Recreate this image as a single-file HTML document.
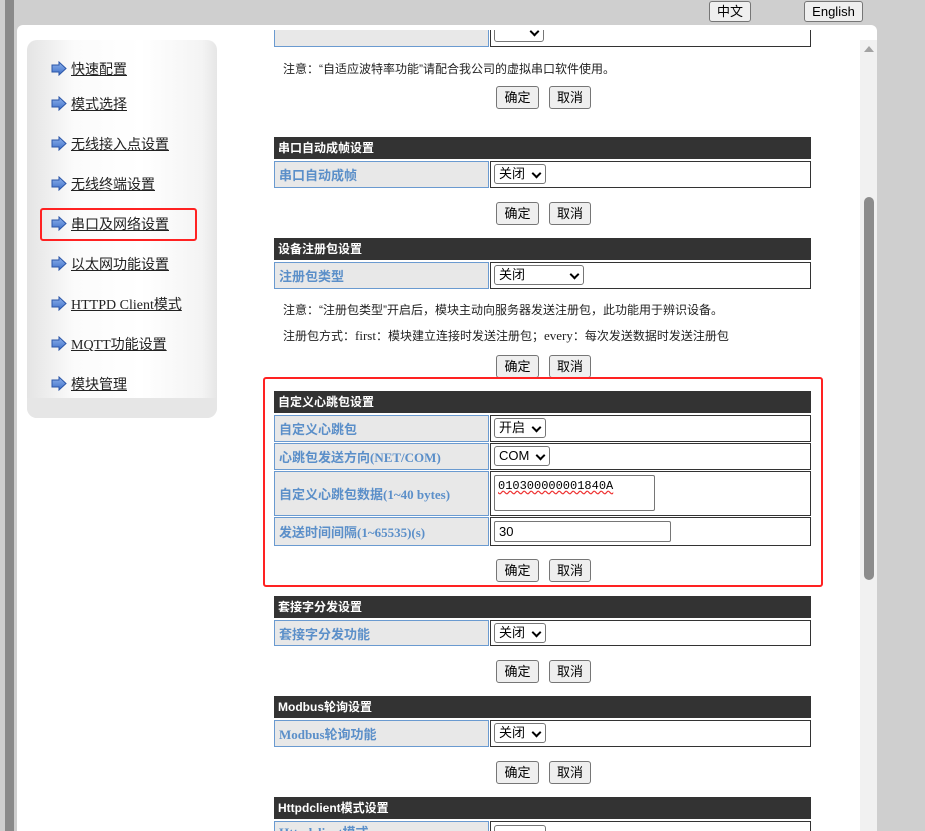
<!DOCTYPE html>
<html style="overflow:hidden;height:831px"><head><meta charset="utf-8"><style>
*{box-sizing:border-box;margin:0;padding:0}
html,body{overflow:hidden}
body{width:925px;height:831px;position:relative;background:#cfcfcf;font-family:"Liberation Sans","Noto Sans CJK SC",sans-serif;font-size:13px;color:#222}
.a{position:absolute}
.lb{position:absolute;left:5px;top:0;width:9px;height:831px;background:#8a8a8a}
.panel{position:absolute;left:17px;top:25px;width:860px;height:806px;background:#fff;border-radius:6px 6px 0 0}
.sb{position:absolute;left:860px;top:40px;width:17px;height:791px;background:#f1f1f1}
.thumb{position:absolute;left:864px;top:197px;width:10px;height:383px;background:#8c8c8c;border-radius:5px}
.tri{position:absolute;left:864px;top:46px;width:0;height:0;border-left:5px solid transparent;border-right:5px solid transparent;border-bottom:6px solid #a3a3a3}
.side{position:absolute;left:27px;top:40px;width:190px;height:378px;border-radius:10px;background:linear-gradient(90deg,#e4e4e4 0%,#fbfbfb 25%,#fff 60%,#f4f4f4 92%,#e6e6e6 100%);overflow:hidden}
.side .bot{position:absolute;left:0;bottom:0;width:100%;height:20px;background:#e6e6e6}
.nav{position:absolute;left:51px;font-size:14px;color:#222;text-decoration:underline;white-space:nowrap;font-family:"Liberation Serif","Noto Sans CJK SC",serif}
.nav svg{position:absolute;left:0;top:2px}
.nav span{margin-left:20px}
.hd{position:absolute;left:274px;width:537px;height:22px;background:#333;color:#fff;font-weight:bold;font-size:12px;line-height:22px;padding-left:4px}
.lc{position:absolute;left:274px;width:215px;background:#e8e8e8;border:1px solid #6a9ad0;color:#5b8fc9;font-weight:bold;font-size:13px;padding-left:4px;display:flex;align-items:center;font-family:"Liberation Serif","Noto Sans CJK SC",serif;overflow:hidden}
.rc{position:absolute;left:490px;width:321px;background:#fff;border:1px solid #333;overflow:hidden}
.sel{position:absolute;left:3px;height:20px;border:1px solid #767676;border-radius:3px;background:#fff;font-size:13px;line-height:18px;padding-left:4px;color:#000}
.sel:after{content:"";position:absolute;right:5px;top:5px;width:5px;height:5px;border-right:2px solid #000;border-bottom:2px solid #000;transform:rotate(45deg)}
.btn{position:absolute;height:23px;border:1px solid #767676;border-radius:3px;background:#efefef;font-size:13px;line-height:21px;text-align:center;color:#000}
.note{position:absolute;left:283px;font-size:12px;color:#222}
.red{position:absolute;border:2px solid #f22;border-radius:3px}
</style></head><body>
<div class="lb"></div>
<div class="btn" style="left:709px;top:1px;width:42px;height:21px;line-height:19px">中文</div>
<div class="btn" style="left:804px;top:1px;width:59px;height:21px;line-height:19px">English</div>
<div class="panel"></div>
<div class="sb"></div><div class="thumb"></div><div class="tri"></div>

<div class="side"><div class="bot"></div></div>
<svg width="0" height="0" style="position:absolute"><defs><linearGradient id="g" x1="0" y1="0" x2="0" y2="1"><stop offset="0" stop-color="#8fb3ec"/><stop offset="1" stop-color="#3d6fc8"/></linearGradient></defs></svg>
<div class="nav" style="top:59px"><svg width="16" height="15"><path d="M1 4h7V1l7 6.5-7 6.5v-3H1z" fill="url(#g)" stroke="#2b56a8"/></svg><span>快速配置</span></div>
<div class="nav" style="top:94px"><svg width="16" height="15"><path d="M1 4h7V1l7 6.5-7 6.5v-3H1z" fill="url(#g)" stroke="#2b56a8"/></svg><span>模式选择</span></div>
<div class="nav" style="top:134px"><svg width="16" height="15"><path d="M1 4h7V1l7 6.5-7 6.5v-3H1z" fill="url(#g)" stroke="#2b56a8"/></svg><span>无线接入点设置</span></div>
<div class="nav" style="top:174px"><svg width="16" height="15"><path d="M1 4h7V1l7 6.5-7 6.5v-3H1z" fill="url(#g)" stroke="#2b56a8"/></svg><span>无线终端设置</span></div>
<div class="nav" style="top:214px"><svg width="16" height="15"><path d="M1 4h7V1l7 6.5-7 6.5v-3H1z" fill="url(#g)" stroke="#2b56a8"/></svg><span>串口及网络设置</span></div>
<div class="nav" style="top:254px"><svg width="16" height="15"><path d="M1 4h7V1l7 6.5-7 6.5v-3H1z" fill="url(#g)" stroke="#2b56a8"/></svg><span>以太网功能设置</span></div>
<div class="nav" style="top:294px"><svg width="16" height="15"><path d="M1 4h7V1l7 6.5-7 6.5v-3H1z" fill="url(#g)" stroke="#2b56a8"/></svg><span>HTTPD Client模式</span></div>
<div class="nav" style="top:334px"><svg width="16" height="15"><path d="M1 4h7V1l7 6.5-7 6.5v-3H1z" fill="url(#g)" stroke="#2b56a8"/></svg><span>MQTT功能设置</span></div>
<div class="nav" style="top:374px"><svg width="16" height="15"><path d="M1 4h7V1l7 6.5-7 6.5v-3H1z" fill="url(#g)" stroke="#2b56a8"/></svg><span>模块管理</span></div>
<div class="red" style="left:40px;top:208px;width:157px;height:33px"></div>

<!-- top partial -->
<div class="lc" style="top:30px;height:17px;border-top:none"></div>
<div class="rc" style="top:30px;height:17px;border-top:none"><div class="sel" style="top:-8px;width:50px;height:20px"></div></div>
<div class="note" style="top:60px">注意：“自适应波特率功能”请配合我公司的虚拟串口软件使用。</div>
<div class="btn" style="left:496px;top:86px;width:43px">确定</div><div class="btn" style="left:549px;top:86px;width:42px">取消</div>

<div class="hd" style="top:137px">串口自动成帧设置</div>
<div class="lc" style="top:161px;height:27px">串口自动成帧</div>
<div class="rc" style="top:161px;height:27px"><div class="sel" style="top:2px;width:52px">关闭</div></div>
<div class="btn" style="left:496px;top:202px;width:43px">确定</div><div class="btn" style="left:549px;top:202px;width:42px">取消</div>

<div class="hd" style="top:238px">设备注册包设置</div>
<div class="lc" style="top:262px;height:27px">注册包类型</div>
<div class="rc" style="top:262px;height:27px"><div class="sel" style="top:2px;width:90px">关闭</div></div>
<div class="note" style="top:301px">注意：“注册包类型”开启后，模块主动向服务器发送注册包，此功能用于辨识设备。</div>
<div class="note" style="top:327px">注册包方式：<span style="font-family:'Liberation Serif',serif;font-size:13px">first</span>：模块建立连接时发送注册包；<span style="font-family:'Liberation Serif',serif;font-size:13px">every</span>：每次发送数据时发送注册包</div>
<div class="btn" style="left:496px;top:355px;width:43px">确定</div><div class="btn" style="left:549px;top:355px;width:42px">取消</div>

<div class="red" style="left:263px;top:377px;width:560px;height:210px"></div>
<div class="hd" style="top:391px">自定义心跳包设置</div>
<div class="lc" style="top:415px;height:27px">自定义心跳包</div>
<div class="rc" style="top:415px;height:27px"><div class="sel" style="top:2px;width:52px">开启</div></div>
<div class="lc" style="top:443px;height:27px">心跳包发送方向(NET/COM)</div>
<div class="rc" style="top:443px;height:27px"><div class="sel" style="top:2px;width:56px">COM</div></div>
<div class="lc" style="top:471px;height:45px">自定义心跳包数据(1~40 bytes)</div>
<div class="rc" style="top:471px;height:45px"><div class="a" style="left:3px;top:3px;width:161px;height:36px;border:1px solid #767676;border-radius:2px;font-family:'Liberation Mono',monospace;font-size:12px;padding:3px 0 0 3px;color:#000"><span style="text-decoration:underline wavy #e33">010300000001840A</span></div></div>
<div class="lc" style="top:517px;height:29px">发送时间间隔(1~65535)(s)</div>
<div class="rc" style="top:517px;height:29px"><div class="a" style="left:3px;top:3px;width:177px;height:21px;border:1px solid #767676;border-radius:2px;padding-left:4px;line-height:19px;color:#000">30</div></div>
<div class="btn" style="left:496px;top:559px;width:43px">确定</div><div class="btn" style="left:549px;top:559px;width:42px">取消</div>

<div class="hd" style="top:596px">套接字分发设置</div>
<div class="lc" style="top:620px;height:26px">套接字分发功能</div>
<div class="rc" style="top:620px;height:26px"><div class="sel" style="top:2px;width:52px">关闭</div></div>
<div class="btn" style="left:496px;top:660px;width:43px">确定</div><div class="btn" style="left:549px;top:660px;width:42px">取消</div>

<div class="hd" style="top:696px">Modbus轮询设置</div>
<div class="lc" style="top:720px;height:27px">Modbus轮询功能</div>
<div class="rc" style="top:720px;height:27px"><div class="sel" style="top:2px;width:52px">关闭</div></div>
<div class="btn" style="left:496px;top:761px;width:43px">确定</div><div class="btn" style="left:549px;top:761px;width:42px">取消</div>

<div class="hd" style="top:797px">Httpdclient模式设置</div>
<div class="lc" style="top:821px;height:10px;align-items:flex-start;border-bottom:none">Httpdclient模式</div>
<div class="rc" style="top:821px;height:10px;border-bottom:none"><div class="sel" style="top:3px;width:52px"></div></div>
</body></html>
